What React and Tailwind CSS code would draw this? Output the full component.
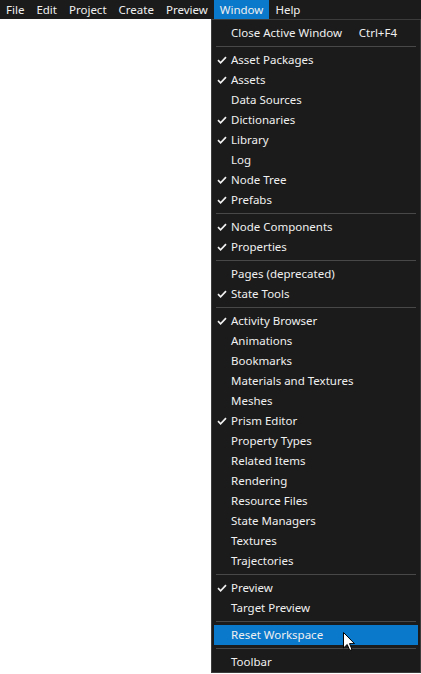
import React from "react";

const menuBar = ["File", "Edit", "Project", "Create", "Preview", "Window", "Help"];

const groups = [
  [{ label: "Close Active Window", shortcut: "Ctrl+F4" }],
  [
    { label: "Asset Packages", checked: true },
    { label: "Assets", checked: true },
    { label: "Data Sources" },
    { label: "Dictionaries", checked: true },
    { label: "Library", checked: true },
    { label: "Log" },
    { label: "Node Tree", checked: true },
    { label: "Prefabs", checked: true },
  ],
  [
    { label: "Node Components", checked: true },
    { label: "Properties", checked: true },
  ],
  [
    { label: "Pages (deprecated)" },
    { label: "State Tools", checked: true },
  ],
  [
    { label: "Activity Browser", checked: true },
    { label: "Animations" },
    { label: "Bookmarks" },
    { label: "Materials and Textures" },
    { label: "Meshes" },
    { label: "Prism Editor", checked: true },
    { label: "Property Types" },
    { label: "Related Items" },
    { label: "Rendering" },
    { label: "Resource Files" },
    { label: "State Managers" },
    { label: "Textures" },
    { label: "Trajectories" },
  ],
  [
    { label: "Preview", checked: true },
    { label: "Target Preview" },
  ],
  [{ label: "Reset Workspace", active: true }],
  [{ label: "Toolbar" }],
];

function Check() {
  return (
    <svg width="10" height="8" viewBox="0 0 10 8" className="absolute left-[3px] top-[6px]">
      <path d="M1 4.2 L3.6 6.8 L9 1.2" fill="none" stroke="#f0f0f0" strokeWidth="1.7" />
    </svg>
  );
}

function Cursor() {
  return (
    <svg
      width="13"
      height="20"
      viewBox="0 0 13 20"
      className="absolute left-[129px] top-[7px]"
    >
      <path
        d="M0.5 0.5 L0.5 16 L4.2 12.5 L6.8 18.5 L9 17.5 L6.5 11.6 L11.5 11.6 Z"
        fill="#ffffff"
        stroke="#000000"
        strokeWidth="1"
        strokeLinejoin="miter"
      />
    </svg>
  );
}

export default function App() {
  return (
    <div
      className="relative w-[421px] h-[674px] bg-white overflow-hidden text-[11.5px] text-[#f0f0f0]"
      style={{ fontFamily: '"Noto Sans", "Open Sans", sans-serif' }}
    >
      <div className="flex h-[19px] bg-[#1b1b1b]">
        {menuBar.map((m) => (
          <div
            key={m}
            className={`px-[6px] h-[19px] leading-[19px] ${m === "Window" ? "bg-[#0a79cc]" : ""}`}
          >
            {m}
          </div>
        ))}
      </div>

      <div className="absolute left-[211px] top-[19px] w-[210px] bg-[#1b1b1b] border border-[#3c3c3c] px-[2px] pt-[3px]">
        {groups.map((g, gi) => (
          <div key={gi}>
            {gi > 0 && (
              <div className="h-[7px] flex items-center px-[2px]">
                <div className="h-px w-full bg-[#484848]" />
              </div>
            )}
            {g.map((it) => (
              <div
                key={it.label}
                className={`relative flex h-[20px] items-center pl-[17px] pr-[8px] ${it.active ? "bg-[#0a79cc]" : ""}`}
              >
                {it.checked && <Check />}
                <span className="leading-[20px]">{it.label}</span>
                {it.shortcut && <span className="ml-auto mr-[13px]">{it.shortcut}</span>}
                {it.active && <Cursor />}
              </div>
            ))}
          </div>
        ))}
      </div>
    </div>
  );
}
